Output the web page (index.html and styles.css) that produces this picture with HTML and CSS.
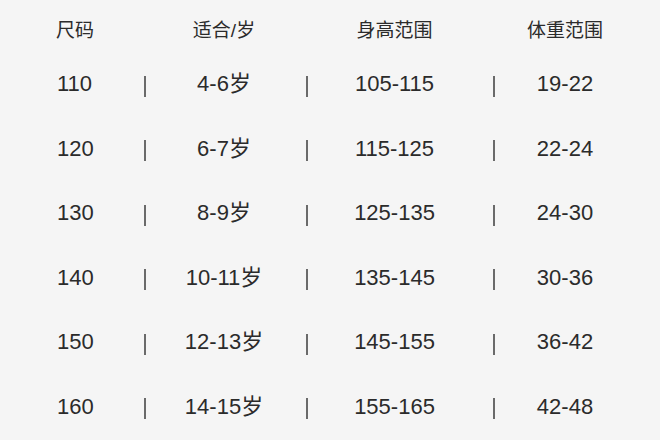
FILE: index.html
```html
<!DOCTYPE html>
<html lang="zh-CN">
<head>
<meta charset="utf-8">
<link rel="stylesheet" href="styles.css">
</head>
<body>
<div class="table">
  <div class="row head">
    <div class="c size">尺码</div><div class="gap"></div>
    <div class="c age">适合/岁</div><div class="gap"></div>
    <div class="c height">身高范围</div><div class="gap"></div>
    <div class="c weight">体重范围</div>
  </div>
  <div class="row">
    <div class="c size">110</div><div class="sep"></div>
    <div class="c age">4-6岁</div><div class="sep"></div>
    <div class="c height">105-115</div><div class="sep"></div>
    <div class="c weight">19-22</div>
  </div>
  <div class="row">
    <div class="c size">120</div><div class="sep"></div>
    <div class="c age">6-7岁</div><div class="sep"></div>
    <div class="c height">115-125</div><div class="sep"></div>
    <div class="c weight">22-24</div>
  </div>
  <div class="row">
    <div class="c size">130</div><div class="sep"></div>
    <div class="c age">8-9岁</div><div class="sep"></div>
    <div class="c height">125-135</div><div class="sep"></div>
    <div class="c weight">24-30</div>
  </div>
  <div class="row">
    <div class="c size">140</div><div class="sep"></div>
    <div class="c age">10-11岁</div><div class="sep"></div>
    <div class="c height">135-145</div><div class="sep"></div>
    <div class="c weight">30-36</div>
  </div>
  <div class="row">
    <div class="c size">150</div><div class="sep"></div>
    <div class="c age">12-13岁</div><div class="sep"></div>
    <div class="c height">145-155</div><div class="sep"></div>
    <div class="c weight">36-42</div>
  </div>
  <div class="row">
    <div class="c size">160</div><div class="sep"></div>
    <div class="c age">14-15岁</div><div class="sep"></div>
    <div class="c height">155-165</div><div class="sep"></div>
    <div class="c weight">42-48</div>
  </div>
</div>
</body>
</html>
```
FILE: styles.css
```css
html, body {
  margin: 0;
  padding: 0;
  background: #f5f5f5;
}
body {
  width: 660px;
  height: 440px;
  overflow: hidden;
  font-family: "Liberation Sans", "Noto Sans CJK SC", sans-serif;
  color: #2b2b2b;
}
.table {
  padding-top: 8px;
  padding-left: 57px;
}
.row {
  display: grid;
  grid-template-columns: 87px 2px 160px 2px 185px 2px 140px;
  align-items: center;
  height: 64.5px;
  font-size: 22px;
}
.row.head {
  height: 44px;
  font-size: 19px;
}
.c {
  white-space: nowrap;
  line-height: 1;
}
.size { text-align: left; }
.age { text-align: center; padding-right: 4px; }
.height { text-align: center; padding-right: 12px; }
.weight { text-align: center; }
.head .size { margin-left: -1px; }
.sep {
  width: 1.5px;
  height: 21px;
  background: #6a6a6a;
  margin-top: 4px;
}
```
